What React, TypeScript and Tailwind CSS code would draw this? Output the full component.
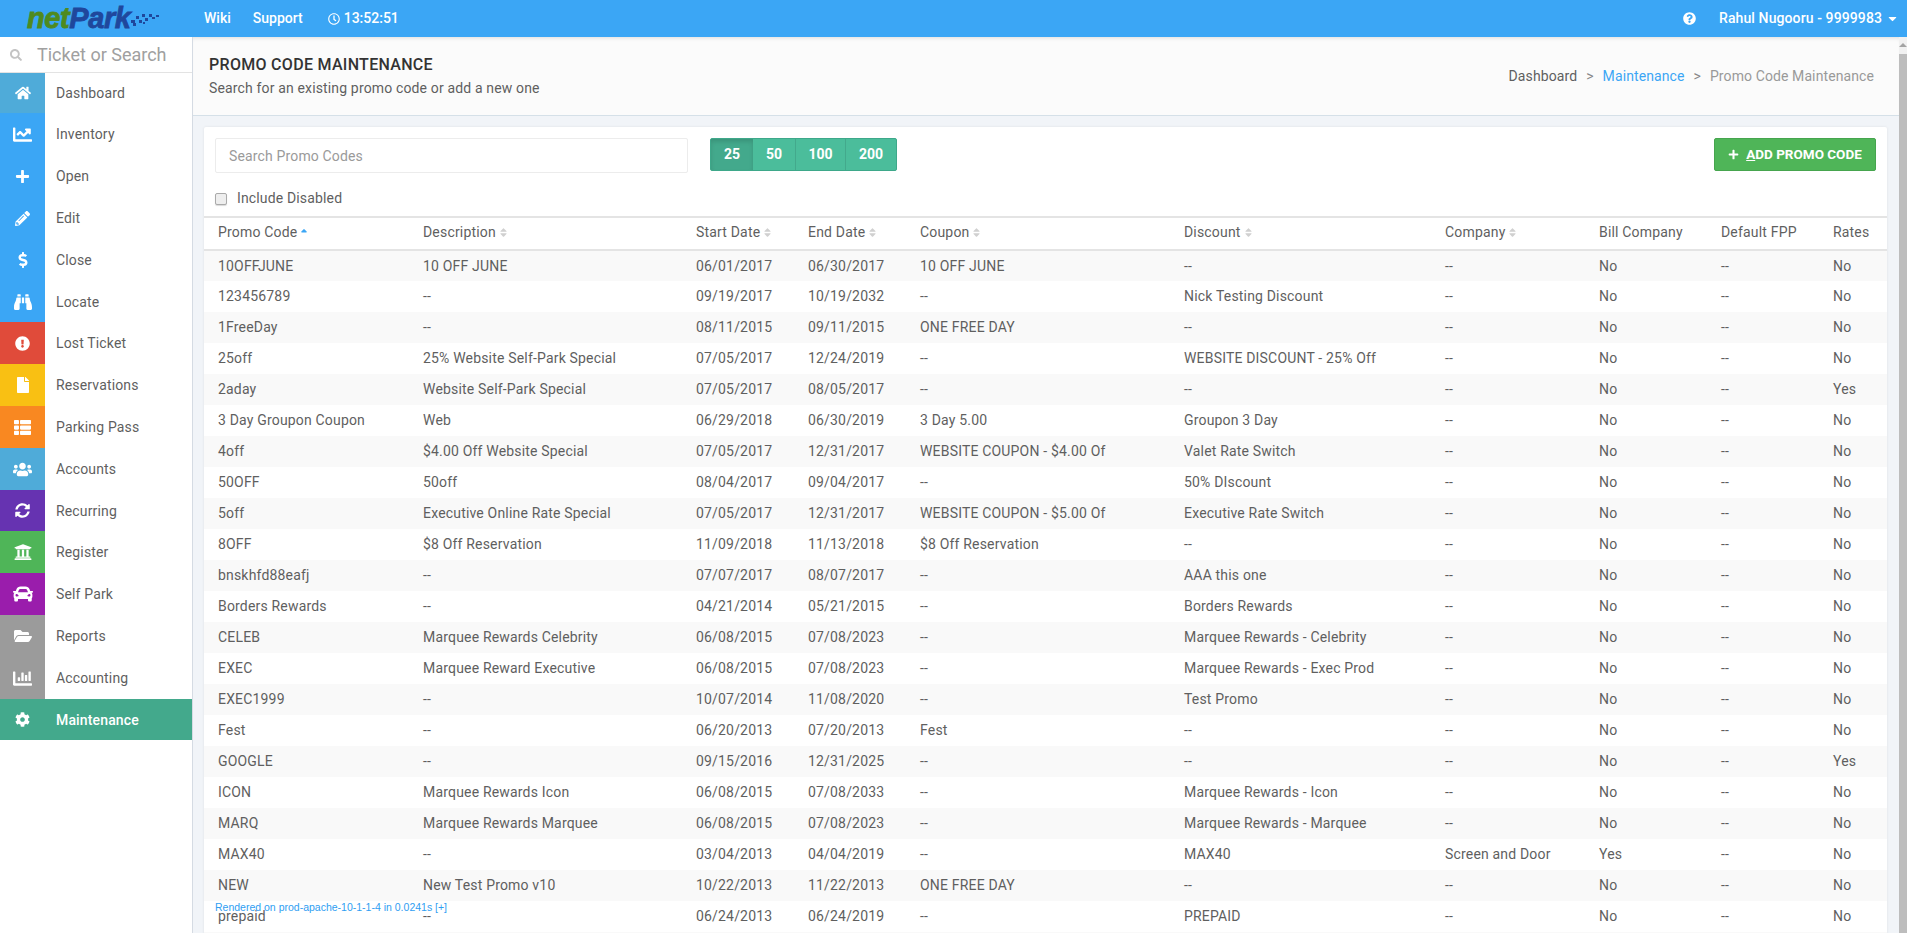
import { ReactNode } from 'react';
import {
  FaBinoculars,
  FaCar,
  FaChartBar,
  FaChartLine,
  FaCog,
  FaDollarSign,
  FaExclamationCircle,
  FaFile,
  FaFolderOpen,
  FaHome,
  FaPencilAlt,
  FaPlus,
  FaQuestionCircle,
  FaSearch,
  FaSortUp,
  FaSort,
  FaSyncAlt,
  FaThList,
  FaUniversity,
  FaUsers,
  FaRegClock,
  FaCaretDown,
} from 'react-icons/fa';

const navItems: { label: string; icon: ReactNode; color: string; height: string }[] = [
  { label: 'Dashboard', icon: <FaHome className="text-[16px]" />, color: 'bg-[#4fabd9]', height: 'h-[40px]' },
  { label: 'Inventory', icon: <FaChartLine className="text-[19px]" />, color: 'bg-[#3ba6f5]', height: 'h-[42px]' },
  { label: 'Open', icon: <FaPlus className="text-[15px]" />, color: 'bg-[#3ba6f5]', height: 'h-[42px]' },
  { label: 'Edit', icon: <FaPencilAlt className="text-[15px]" />, color: 'bg-[#3ba6f5]', height: 'h-[42px]' },
  { label: 'Close', icon: <FaDollarSign className="text-[16px]" />, color: 'bg-[#3ba6f5]', height: 'h-[42px]' },
  { label: 'Locate', icon: <FaBinoculars className="text-[18px]" />, color: 'bg-[#3ba6f5]', height: 'h-[41px]' },
  { label: 'Lost Ticket', icon: <FaExclamationCircle className="text-[15px]" />, color: 'bg-[#e04b3a]', height: 'h-[42px]' },
  { label: 'Reservations', icon: <FaFile className="text-[16px]" />, color: 'bg-[#f9c013]', height: 'h-[42px]' },
  { label: 'Parking Pass', icon: <FaThList className="text-[17px]" />, color: 'bg-[#f98821]', height: 'h-[42px]' },
  { label: 'Accounts', icon: <FaUsers className="text-[19px]" />, color: 'bg-[#4fabd9]', height: 'h-[42px]' },
  { label: 'Recurring', icon: <FaSyncAlt className="text-[15px]" />, color: 'bg-[#6633b1]', height: 'h-[41px]' },
  { label: 'Register', icon: <FaUniversity className="text-[18px]" />, color: 'bg-[#4fb558]', height: 'h-[42px]' },
  { label: 'Self Park', icon: <FaCar className="text-[20px]" />, color: 'bg-[#9a1dac]', height: 'h-[42px]' },
  { label: 'Reports', icon: <FaFolderOpen className="text-[18px]" />, color: 'bg-[#9b9b9b]', height: 'h-[42px]' },
  { label: 'Accounting', icon: <FaChartBar className="text-[19px]" />, color: 'bg-[#9b9b9b]', height: 'h-[42px]' },
];

const rows = [
  ['10OFFJUNE', '10 OFF JUNE', '06/01/2017', '06/30/2017', '10 OFF JUNE', '--', '--', 'No', '--', 'No'],
  ['123456789', '--', '09/19/2017', '10/19/2032', '--', 'Nick Testing Discount', '--', 'No', '--', 'No'],
  ['1FreeDay', '--', '08/11/2015', '09/11/2015', 'ONE FREE DAY', '--', '--', 'No', '--', 'No'],
  ['25off', '25% Website Self-Park Special', '07/05/2017', '12/24/2019', '--', 'WEBSITE DISCOUNT - 25% Off', '--', 'No', '--', 'No'],
  ['2aday', 'Website Self-Park Special', '07/05/2017', '08/05/2017', '--', '--', '--', 'No', '--', 'Yes'],
  ['3 Day Groupon Coupon', 'Web', '06/29/2018', '06/30/2019', '3 Day 5.00', 'Groupon 3 Day', '--', 'No', '--', 'No'],
  ['4off', '$4.00 Off Website Special', '07/05/2017', '12/31/2017', 'WEBSITE COUPON - $4.00 Of', 'Valet Rate Switch', '--', 'No', '--', 'No'],
  ['50OFF', '50off', '08/04/2017', '09/04/2017', '--', '50% DIscount', '--', 'No', '--', 'No'],
  ['5off', 'Executive Online Rate Special', '07/05/2017', '12/31/2017', 'WEBSITE COUPON - $5.00 Of', 'Executive Rate Switch', '--', 'No', '--', 'No'],
  ['8OFF', '$8 Off Reservation', '11/09/2018', '11/13/2018', '$8 Off Reservation', '--', '--', 'No', '--', 'No'],
  ['bnskhfd88eafj', '--', '07/07/2017', '08/07/2017', '--', 'AAA this one', '--', 'No', '--', 'No'],
  ['Borders Rewards', '--', '04/21/2014', '05/21/2015', '--', 'Borders Rewards', '--', 'No', '--', 'No'],
  ['CELEB', 'Marquee Rewards Celebrity', '06/08/2015', '07/08/2023', '--', 'Marquee Rewards - Celebrity', '--', 'No', '--', 'No'],
  ['EXEC', 'Marquee Reward Executive', '06/08/2015', '07/08/2023', '--', 'Marquee Rewards - Exec Prod', '--', 'No', '--', 'No'],
  ['EXEC1999', '--', '10/07/2014', '11/08/2020', '--', 'Test Promo', '--', 'No', '--', 'No'],
  ['Fest', '--', '06/20/2013', '07/20/2013', 'Fest', '--', '--', 'No', '--', 'No'],
  ['GOOGLE', '--', '09/15/2016', '12/31/2025', '--', '--', '--', 'No', '--', 'Yes'],
  ['ICON', 'Marquee Rewards Icon', '06/08/2015', '07/08/2033', '--', 'Marquee Rewards - Icon', '--', 'No', '--', 'No'],
  ['MARQ', 'Marquee Rewards Marquee', '06/08/2015', '07/08/2023', '--', 'Marquee Rewards - Marquee', '--', 'No', '--', 'No'],
  ['MAX40', '--', '03/04/2013', '04/04/2019', '--', 'MAX40', 'Screen and Door', 'Yes', '--', 'No'],
  ['NEW', 'New Test Promo v10', '10/22/2013', '11/22/2013', 'ONE FREE DAY', '--', '--', 'No', '--', 'No'],
  ['prepaid', '--', '06/24/2013', '06/24/2019', '--', 'PREPAID', '--', 'No', '--', 'No'],
];

const headers: { label: string; sort: 'up' | 'both' | 'none' }[] = [
  { label: 'Promo Code', sort: 'up' },
  { label: 'Description', sort: 'both' },
  { label: 'Start Date', sort: 'both' },
  { label: 'End Date', sort: 'both' },
  { label: 'Coupon', sort: 'both' },
  { label: 'Discount', sort: 'both' },
  { label: 'Company', sort: 'both' },
  { label: 'Bill Company', sort: 'none' },
  { label: 'Default FPP', sort: 'none' },
  { label: 'Rates', sort: 'none' },
];

function Logo() {
  return (
    <div className="flex items-center w-[192px] pl-[27px] shrink-0">
      <span className="font-['Liberation_Sans',sans-serif] text-[29px] font-bold italic leading-none tracking-[-0.4px] text-[#4f8a1e] [-webkit-text-stroke:0.8px_#4f8a1e]">
        net
      </span>
      <span className="font-['Liberation_Sans',sans-serif] text-[29px] font-bold italic leading-none tracking-[-0.4px] text-[#1f479c] [-webkit-text-stroke:0.8px_#1f479c]">
        Park
      </span>
      <svg width="30" height="16" viewBox="0 0 30 16" className="-ml-[1px] mt-[1px]" fill="#1f479c">
        <rect x="1" y="9" width="4" height="3" />
        <rect x="6" y="5" width="3" height="3" />
        <rect x="3" y="12" width="3" height="3" />
        <rect x="9" y="9" width="3" height="3" />
        <rect x="12" y="3" width="3" height="3" />
        <rect x="15" y="7" width="3" height="3" />
        <rect x="19" y="3" width="3" height="3" />
        <rect x="22" y="6" width="3" height="2" />
        <rect x="26" y="4" width="3" height="2" />
        <rect x="13" y="11" width="2" height="2" />
      </svg>
    </div>
  );
}

function TopBar() {
  return (
    <header className="h-[37px] shrink-0 bg-[#3ba6f5] text-white flex items-center text-[14px] font-medium">
      <Logo />
      <nav className="flex items-center">
        <span className="ml-[12px]">Wiki</span>
        <span className="ml-[22px]">Support</span>
        <span className="ml-[25px] flex items-center gap-[4px]">
          <FaRegClock className="text-[12px]" />
          13:52:51
        </span>
      </nav>
      <div className="ml-auto flex items-center pr-[8px] tracking-[0.1px]">
        <FaQuestionCircle className="text-[13px] mr-[23px]" />
        <span>Rahul Nugooru - 9999983</span>
        <FaCaretDown className="text-[13px] ml-[4px]" />
      </div>
    </header>
  );
}

function Sidebar() {
  return (
    <aside className="w-[193px] shrink-0 bg-white border-r border-[#d5dbe3] flex flex-col">
      <div className="h-[36px] shrink-0 flex items-center border-b border-[#e3e3e3]">
        <FaSearch className="ml-[10px] text-[12px] text-[#c4c4c4]" />
        <span className="ml-[15px] text-[18px] text-[#a0a0a0]">Ticket or Search</span>
      </div>
      {navItems.map((item) => (
        <div key={item.label} className={`${item.height} shrink-0 flex items-center`}>
          <div className={`${item.color} w-[45px] h-full flex items-center justify-center text-white`}>
            {item.icon}
          </div>
          <span className="ml-[11px] pt-[1px] text-[14px] tracking-[0.15px] text-[#5f5f5f]">{item.label}</span>
        </div>
      ))}
      <div className="h-[41px] shrink-0 flex items-center bg-[#43a98c] text-white">
        <div className="w-[45px] flex items-center justify-center text-[15px]">
          <FaCog />
        </div>
        <span className="ml-[11px] pt-[1px] text-[14px] tracking-[0.15px] font-medium">Maintenance</span>
      </div>
    </aside>
  );
}

function SortMark({ sort }: { sort: 'up' | 'both' | 'none' }) {
  if (sort === 'none') return null;
  if (sort === 'up') return <FaSortUp className="inline ml-[2px] text-[10px] text-[#3ba6f5]" />;
  return <FaSort className="inline ml-[2px] text-[11px] text-[#d0d0d0]" />;
}

function PromoTable() {
  return (
    <table className="w-full table-fixed border-collapse text-[14px] tracking-[0.18px] text-[#5f5f5f]">
      <colgroup>
        <col className="w-[205px]" />
        <col className="w-[273px]" />
        <col className="w-[112px]" />
        <col className="w-[112px]" />
        <col className="w-[264px]" />
        <col className="w-[261px]" />
        <col className="w-[154px]" />
        <col className="w-[122px]" />
        <col className="w-[112px]" />
        <col className="w-[68px]" />
      </colgroup>
      <thead>
        <tr className="h-[33px] border-t-2 border-b-2 border-[#e4e4e4]">
          {headers.map((h) => (
            <th key={h.label} className="px-[14px] pb-[3px] text-left font-normal whitespace-nowrap">
              {h.label}
              <SortMark sort={h.sort} />
            </th>
          ))}
        </tr>
      </thead>
      <tbody>
        {rows.map((row, i) => (
          <tr key={row[0]} className={`h-[31px] ${i % 2 === 0 ? 'bg-[#f9f9f9]' : 'bg-white'}`}>
            {row.map((cell, j) => (
              <td key={j} className="px-[14px] whitespace-nowrap overflow-hidden">
                {cell}
              </td>
            ))}
          </tr>
        ))}
        <tr className="h-[31px] bg-[#f9f9f9]">
          <td colSpan={10} />
        </tr>
      </tbody>
    </table>
  );
}

export default function App() {
  return (
    <div className="h-[933px] w-full overflow-hidden flex flex-col font-['Roboto',sans-serif]">
      <TopBar />
      <div className="flex-1 flex min-h-0">
        <Sidebar />
        <main className="flex-1 min-w-0 bg-[#f1f4f8] overflow-hidden relative">
          <div className="h-[79px] bg-[#fbfbfb] border-b border-[#d5e0e8] flex items-start justify-between pl-[16px] pr-[25px] shadow-[inset_0_4px_4px_-3px_rgba(0,0,0,0.12)]">
            <div className="pt-[18px]">
              <h1 className="text-[16px] leading-[20px] font-medium tracking-[0.3px] text-[#333333]">PROMO CODE MAINTENANCE</h1>
              <p className="text-[14px] leading-[18px] mt-[4px] tracking-[0.15px] text-[#5f5f5f]">
                Search for an existing promo code or add a new one
              </p>
            </div>
            <div className="pt-[30px] text-[14px] leading-[18px] tracking-[0.1px] text-[#5f5f5f] flex">
              <span>Dashboard</span>
              <span className="mx-[9px] text-[#888888]">&gt;</span>
              <span className="text-[#3ba6f5]">Maintenance</span>
              <span className="mx-[9px] text-[#888888]">&gt;</span>
              <span className="text-[#999999]">Promo Code Maintenance</span>
            </div>
          </div>
          <section className="ml-[11px] mr-[12px] mt-[11px] bg-white rounded-[2px] shadow-[0_0_3px_rgba(0,0,0,0.08)]">
            <div className="px-[11px] pt-[11px] h-[89px]">
              <div className="flex items-start">
                <div className="w-[473px] h-[35px] border border-[#ececec] rounded-[2px] flex items-center pl-[13px] pt-[1px] text-[14px] tracking-[0.15px] text-[#9a9a9a]">
                  Search Promo Codes
                </div>
                <div className="ml-[22px] h-[33px] flex rounded-[2px] border border-[#3ea88a] bg-[#4bbd9b] text-white text-[14px] font-bold">
                  <span className="w-[42px] flex items-center justify-center bg-[#43a98c] shadow-[inset_0_3px_4px_rgba(0,0,0,0.12)]">25</span>
                  <span className="w-[43px] flex items-center justify-center border-r border-[#43a98c]">50</span>
                  <span className="w-[50px] flex items-center justify-center border-r border-[#43a98c]">100</span>
                  <span className="w-[50px] flex items-center justify-center">200</span>
                </div>
                <button className="ml-auto w-[162px] h-[33px] flex items-center justify-center gap-[7px] bg-[#4fb558] border border-[#46a54e] rounded-[2px] text-white text-[13.5px] font-bold">
                  <FaPlus className="text-[11px]" />
                  <span>
                    <span className="underline">A</span>DD PROMO CODE
                  </span>
                </button>
              </div>
              <label className="mt-[15px] flex items-center text-[14px] tracking-[0.15px] text-[#5f5f5f]">
                <span className="w-[12px] h-[12px] rounded-[2px] border border-[#aaaaaa] bg-[#eeeeee] shadow-[0_1px_1px_rgba(0,0,0,0.15)]" />
                <span className="ml-[10px]">Include Disabled</span>
              </label>
            </div>
            <PromoTable />
          </section>
          <div className="absolute left-[22px] top-[864px] font-['Liberation_Sans',sans-serif] text-[10.5px] leading-[13px] text-[#2f9ef2]">
            Rendered on prod-apache-10-1-1-4 in 0.0241s [+]
          </div>
        </main>
        <div className="w-[8px] shrink-0 bg-[#f1f1f1] flex flex-col">
          <div className="h-[17px] flex justify-center pt-[6px]">
            <div className="w-0 h-0 border-x-[4px] border-x-transparent border-b-[4px] border-b-[#a3a3a3]" />
          </div>
          <div className="flex-1 bg-[#bdbdbd]" />
        </div>
      </div>
    </div>
  );
}
